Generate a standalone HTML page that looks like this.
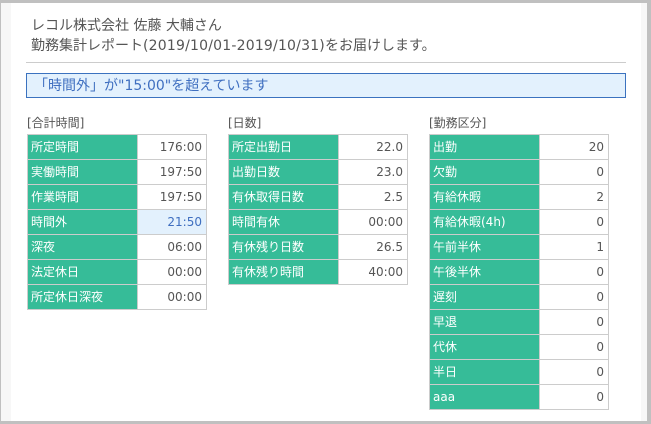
<!DOCTYPE html>
<html lang="ja">
<head>
<meta charset="utf-8">
<style>
html,body{margin:0;padding:0;width:651px;height:424px;overflow:hidden;background:#c0c0c0}
body{position:relative;font-family:"DejaVu Sans","Noto Sans CJK JP",sans-serif;color:#555}
#side{position:absolute;left:1px;top:3px;width:646px;height:418px;background:#f7f7f7}
#main{position:absolute;left:11px;top:3px;width:630px;height:418px;background:#fff}
.h{position:absolute;left:31px;font-size:14px;line-height:20px;white-space:nowrap;color:#555}
#hr{position:absolute;left:26px;top:62px;width:600px;height:1px;background:#ccc}
#alert{position:absolute;left:26px;top:73px;width:598px;height:23px;border:1px solid #3b72bf;background:#e3f1fd;color:#3f6fc0;font-size:14px;line-height:25px;white-space:nowrap;text-indent:7px;overflow:hidden}
.t{position:absolute;font-size:12px;line-height:16px;white-space:nowrap;color:#555;top:115px}
table{position:absolute;top:134px;border-collapse:collapse;table-layout:fixed;width:180px;font-size:12px}
td{border:1px solid #ccc;padding:0;line-height:24px;box-sizing:border-box;height:25px;overflow:hidden;white-space:nowrap}
td:first-child{width:110px;background:#36bc98;color:#fff;padding-left:3px}
td:last-child{text-align:right;padding-right:4px;color:#555;background:#fff}
td.o{background:#e3f1fd!important;color:#3f6fc0!important}
</style>
</head>
<body>
<div id="side"></div>
<div id="main"></div>
<div class="h" style="top:16px">レコル株式会社 佐藤 大輔さん</div>
<div class="h" style="top:36px">勤務集計レポート<span style="letter-spacing:.2px">(2019/10/01-2019/10/31)</span>をお届けします。</div>
<div id="hr"></div>
<div id="alert">「時間外」が"15:00"を超えています</div>

<div class="t" style="left:27px">[合計時間]</div>
<table style="left:27px">
<tr><td>所定時間</td><td>176:00</td></tr>
<tr><td>実働時間</td><td>197:50</td></tr>
<tr><td>作業時間</td><td>197:50</td></tr>
<tr><td>時間外</td><td class="o">21:50</td></tr>
<tr><td>深夜</td><td>06:00</td></tr>
<tr><td>法定休日</td><td>00:00</td></tr>
<tr><td>所定休日深夜</td><td>00:00</td></tr>
</table>

<div class="t" style="left:228px">[日数]</div>
<table style="left:228px">
<tr><td>所定出勤日</td><td>22.0</td></tr>
<tr><td>出勤日数</td><td>23.0</td></tr>
<tr><td>有休取得日数</td><td>2.5</td></tr>
<tr><td>時間有休</td><td>00:00</td></tr>
<tr><td>有休残り日数</td><td>26.5</td></tr>
<tr><td>有休残り時間</td><td>40:00</td></tr>
</table>

<div class="t" style="left:429px">[勤務区分]</div>
<table style="left:429px">
<tr><td>出勤</td><td>20</td></tr>
<tr><td>欠勤</td><td>0</td></tr>
<tr><td>有給休暇</td><td>2</td></tr>
<tr><td>有給休暇(4h)</td><td>0</td></tr>
<tr><td>午前半休</td><td>1</td></tr>
<tr><td>午後半休</td><td>0</td></tr>
<tr><td>遅刻</td><td>0</td></tr>
<tr><td>早退</td><td>0</td></tr>
<tr><td>代休</td><td>0</td></tr>
<tr><td>半日</td><td>0</td></tr>
<tr><td>aaa</td><td>0</td></tr>
</table>
</body>
</html>
